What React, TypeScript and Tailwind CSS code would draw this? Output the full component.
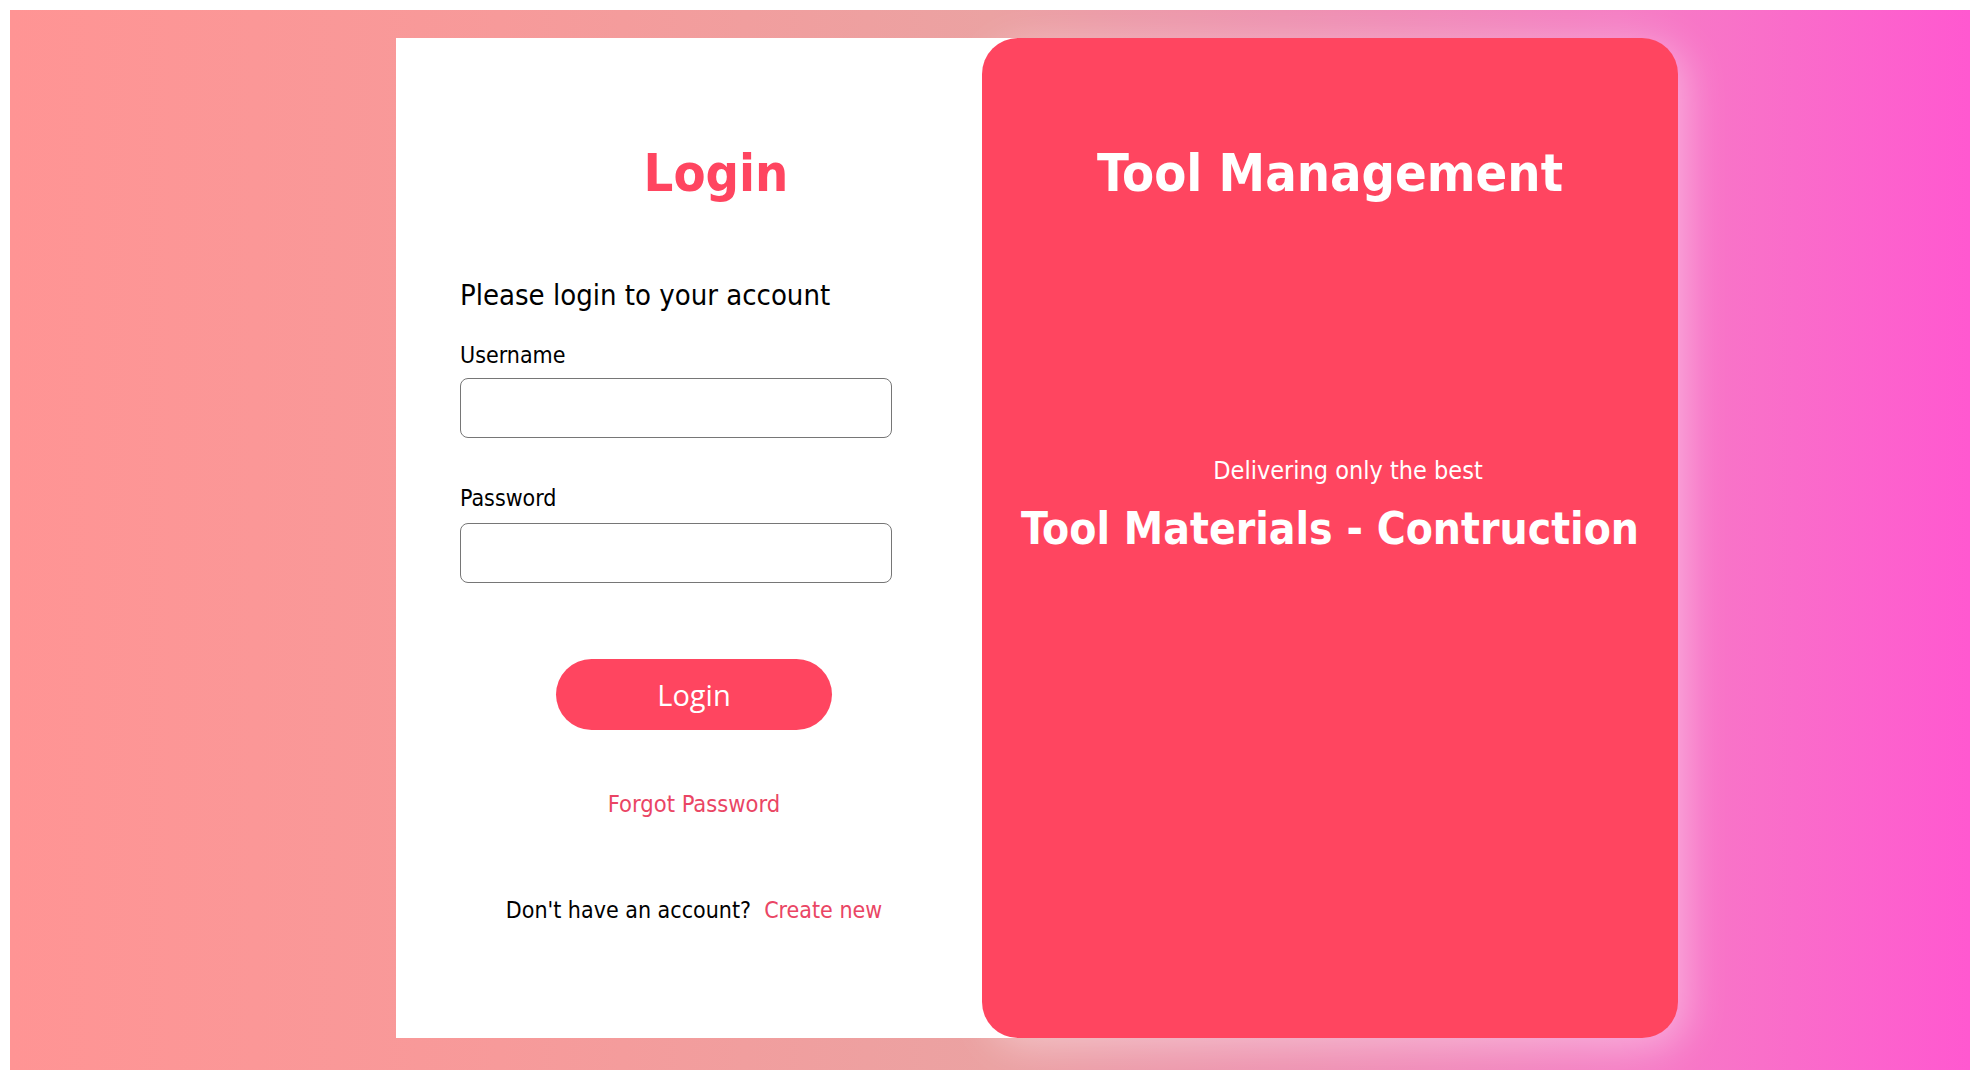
export default function App() {
  return (
    <div className="min-h-screen bg-white p-[10px] font-['DejaVu_Sans_Condensed','DejaVu_Sans',sans-serif]">
      <div className="flex h-[1060px] bg-[linear-gradient(to_right,#ff9494_0%,#f79a9a_25%,#eba2a2_50%,#ee92b0_65%,#f57fc4_82%,#ff58d0_100%)] pl-[386px] pt-[28px]">
        <LoginCard />
        <InfoPanel />
      </div>
    </div>
  );
}

function LoginCard() {
  return (
    <div className="flex h-[1000px] w-[626px] flex-col bg-white pl-[64px] pr-[50px] pt-[104px] text-black">
      <h1 className="text-center text-[52px] font-bold leading-[62px] text-[#ff4560]">Login</h1>

      <p className="mt-[74px] text-[29px] leading-[34px]">Please login to your account</p>

      <label className="mt-[29px] text-[23px] leading-[28px]">Username</label>
      <input type="text" className="mt-[9px] h-[60px] w-[432px] rounded-[8px] border border-[#767676] px-3 outline-none" />

      <label className="mt-[46px] text-[23px] leading-[28px]">Password</label>
      <input type="password" className="mt-[11px] h-[60px] w-[432px] rounded-[8px] border border-[#767676] px-3 outline-none" />

      <div className="flex w-[468px] flex-col items-center">
        <button className="mt-[76px] h-[71px] w-[276px] rounded-full bg-[#ff4560] font-['Open_Sans',sans-serif] text-[29px] text-white">
          Login
        </button>
        <a className="mt-[60px] text-[23.5px] leading-[28px] text-[#ea4564]">Forgot Password</a>
        <p className="mt-[78px] text-[23px] leading-[28px]">
          Don't have an account?&nbsp;&nbsp;<a className="text-[#ea4564]">Create new</a>
        </p>
      </div>
    </div>
  );
}

function InfoPanel() {
  return (
    <div className="relative -ml-[40px] flex h-[1000px] w-[696px] flex-col items-center rounded-[36px] bg-[#ff4560] pt-[104px] text-white shadow-[8px_8px_40px_rgba(255,255,255,0.4)]">
      <h2 className="text-[52px] font-bold leading-[62px]">Tool Management</h2>
      <p className="ml-[36px] mt-[252px] text-[25px] leading-[30px]">Delivering only the best</p>
      <h3 className="mt-[16px] text-[44px] font-bold leading-[53px]">Tool Materials - Contruction</h3>
    </div>
  );
}
